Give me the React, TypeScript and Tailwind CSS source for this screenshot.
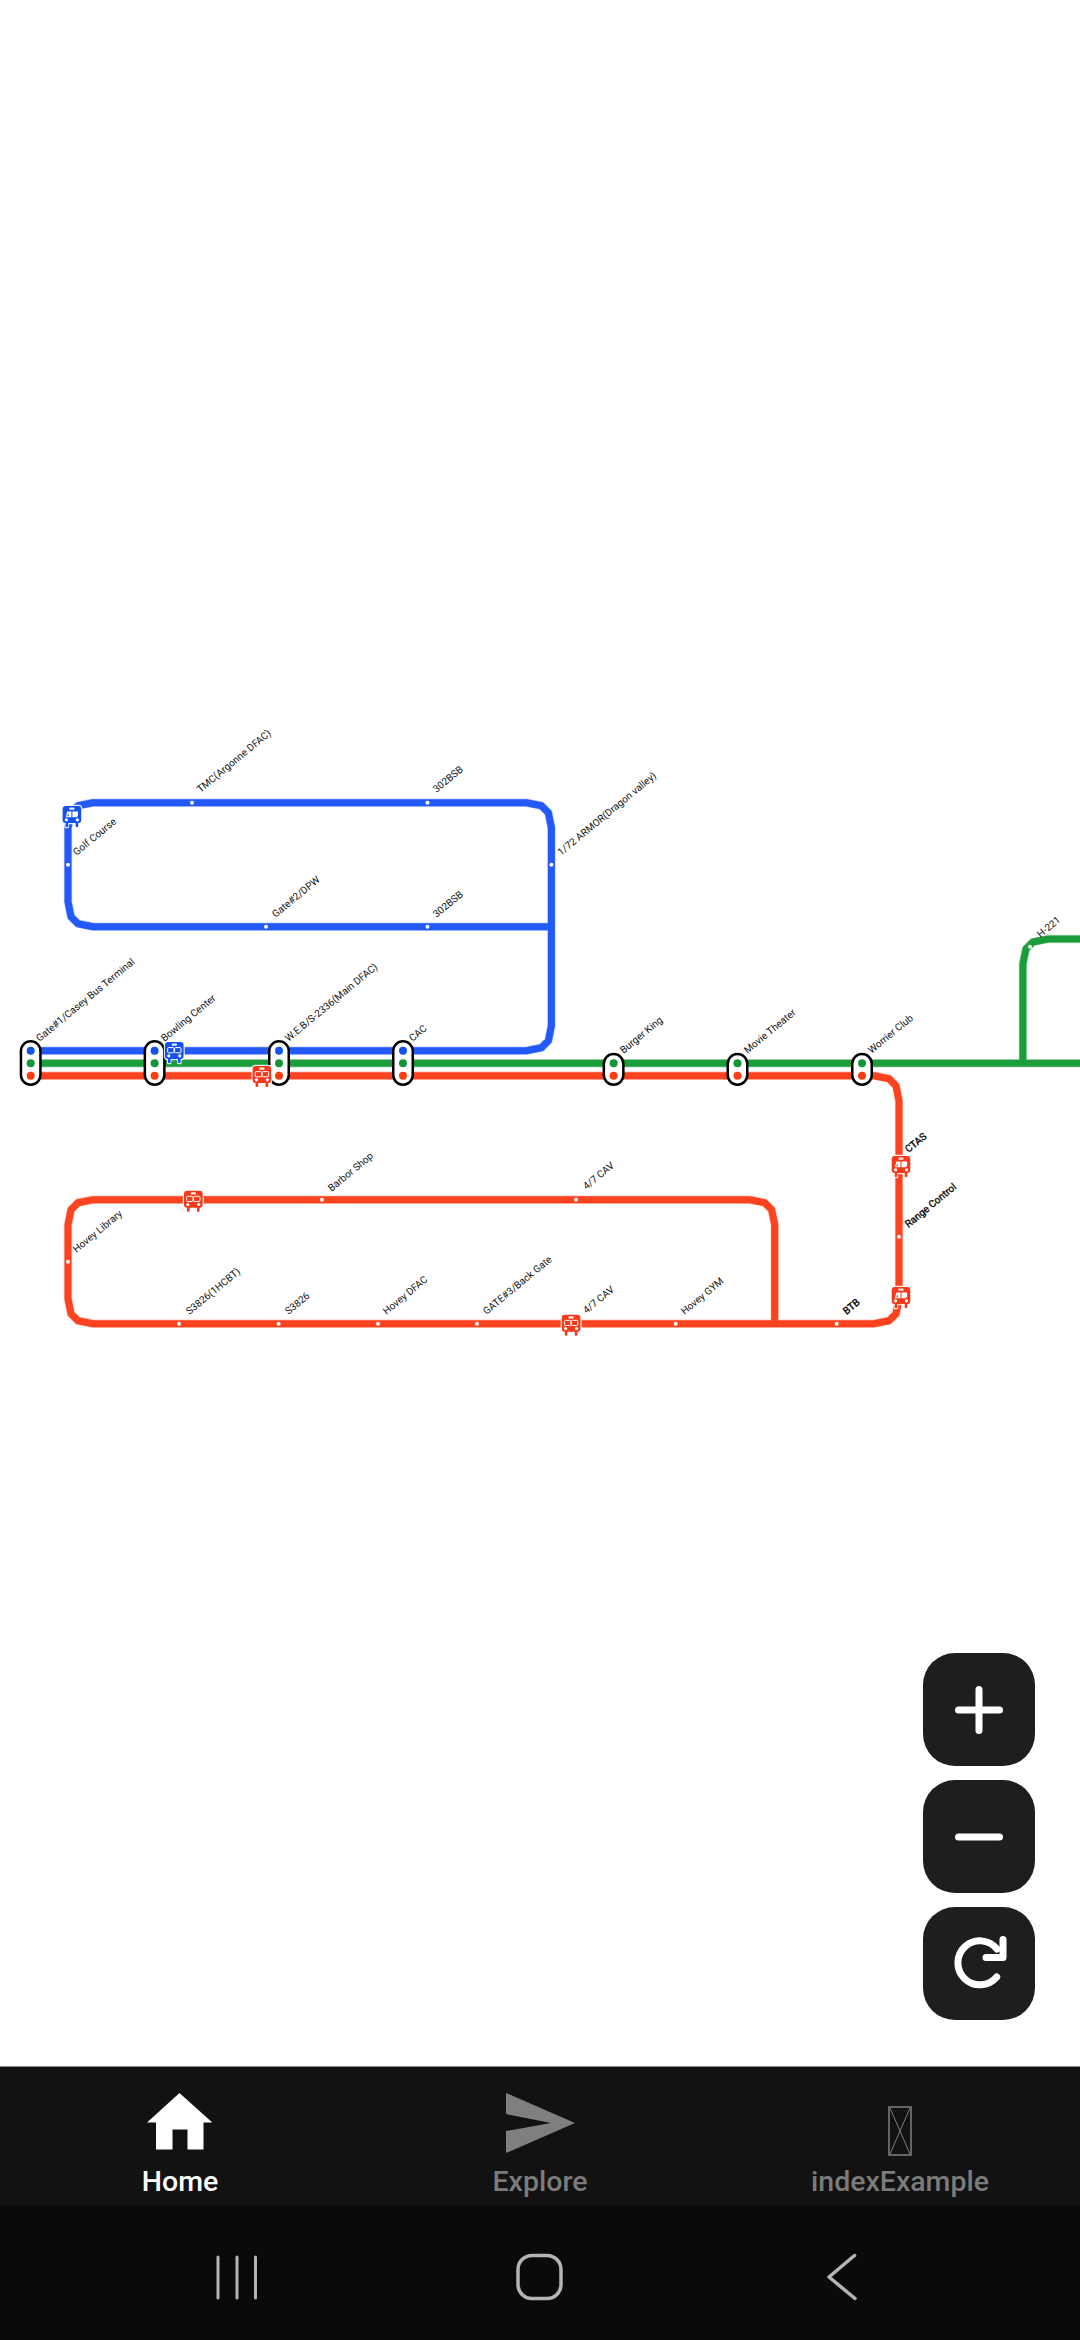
const BLUE = "#2259f7";
const GREEN = "#1c9d3c";
const RED = "#fb4320";

type P = [number, number];

// coarse rounded corner: the map draws its arcs as four short segments
function corner(c: P, a: P, b: P): string {
  const pt = (u: number, v: number) => `${c[0] - a[0] * u + b[0] * v},${c[1] - a[1] * u + b[1] * v}`;
  return `L${pt(25, 0)} L${pt(10, 3)} L${pt(3, 10)} L${pt(0, 25)}`;
}

const R: P = [1, 0], L: P = [-1, 0], U: P = [0, -1], D: P = [0, 1];
const Y_B = 1050.7, Y_G = 1063.3, Y_R = 1075.7;

const bluePath =
  `M30,${Y_B} ` +
  corner([551.4, Y_B], R, U) +
  corner([551.4, 802.7], U, L) +
  corner([68, 802.7], L, D) +
  corner([68, 926.7], D, R) +
  ` L551.4,926.7`;

const redPath =
  `M30,${Y_R} ` +
  corner([899, Y_R], R, D) +
  corner([899, 1323.7], D, L) +
  corner([68, 1323.7], L, U) +
  corner([68, 1199.7], U, R) +
  corner([774.7, 1199.7], R, D) +
  ` L774.7,1323.7`;

const greenPath = `M30,${Y_G} L1080,${Y_G} M1022.9,${Y_G} ` + corner([1022.9, 939], U, R) + ` L1080,939`;

const dots: P[] = [
  [192, 802.7], [427.5, 802.7], [68, 864.7], [551.4, 864.7], [266, 926.7], [427.5, 926.7],
  [322, 1199.7], [576, 1199.7], [68, 1261.7], [179, 1323.7], [278.6, 1323.7], [378, 1323.7],
  [477, 1323.7], [675.7, 1323.7], [836.7, 1323.7], [899, 1236.7], [1030, 946.7],
];

const labels: { t: string; x: number; y: number; bold?: boolean }[] = [
  { t: "TMC(Argonne DFAC)", x: 197, y: 793 },
  { t: "302BSB", x: 433, y: 793 },
  { t: "Golf Course", x: 73, y: 856 },
  { t: "Gate#2/DPW", x: 272, y: 918 },
  { t: "302BSB", x: 433, y: 918 },
  { t: "Gate#1/Casey Bus Terminal", x: 36, y: 1042 },
  { t: "Bowling Center", x: 161, y: 1042 },
  { t: "W.E.B/S-2336(Main DFAC)", x: 285, y: 1042 },
  { t: "CAC", x: 409, y: 1042 },
  { t: "1/72 ARMOR(Dragon valley)", x: 557.5, y: 856 },
  { t: "Burger King", x: 620, y: 1054 },
  { t: "Movie Theater", x: 744, y: 1054 },
  { t: "Worrier Club", x: 868, y: 1054 },
  { t: "H-221", x: 1037, y: 938 },
  { t: "Barbor Shop", x: 328, y: 1192 },
  { t: "Hovey Library", x: 73, y: 1253 },
  { t: "S3826(1HCBT)", x: 186, y: 1315 },
  { t: "S3826", x: 285, y: 1315 },
  { t: "Hovey DFAC", x: 383, y: 1315 },
  { t: "GATE#3/Back Gate", x: 483, y: 1315 },
  { t: "4/7 CAV", x: 583, y: 1190 },
  { t: "4/7 CAV", x: 583, y: 1314 },
  { t: "Hovey GYM", x: 681, y: 1315 },
  { t: "BTB", x: 843, y: 1315, bold: true },
  { t: "CTAS", x: 905, y: 1153, bold: true },
  { t: "Range Control", x: 905, y: 1228, bold: true },
];

const stations: { x: number; three: boolean }[] = [
  { x: 30.7, three: true },
  { x: 154.6, three: true },
  { x: 279, three: true },
  { x: 403, three: true },
  { x: 613.6, three: false },
  { x: 737.5, three: false },
  { x: 862, three: false },
];

function Capsule({ x, three }: { x: number; three: boolean }) {
  const top = three ? 1041.2 : 1054;
  return (
    <g>
      <rect x={x - 9.75} y={top} width={19.5} height={1084.8 - top} rx={9.75} fill="#fff" stroke="#000" strokeWidth={2.5} />
      {three && <circle cx={x} cy={Y_B} r={4} fill="#1452ee" />}
      <circle cx={x} cy={Y_G} r={4} fill="#139636" />
      <circle cx={x} cy={Y_R} r={4} fill="#fd3c12" />
    </g>
  );
}

function Bus({ x, y, color, doors }: { x: number; y: number; color: string; doors?: boolean }) {
  // x, y: top-left of the 18.5 x 21 bus
  return (
    <g transform={`translate(${x} ${y})`}>
      <rect x={-1.2} y={-1.2} width={21} height={19.4} rx={4} fill="#fff" fillOpacity={0.85} />
      <rect x={2} y={16} width={4.4} height={6.2} rx={1} fill="#fff" fillOpacity={0.85} />
      <rect x={12.2} y={16} width={4.4} height={6.2} rx={1} fill="#fff" fillOpacity={0.85} />
      <rect x={0} y={0} width={18.6} height={17} rx={3} fill={color} />
      <rect x={3} y={16} width={2.6} height={5} rx={0.8} fill={color} />
      <rect x={13} y={16} width={2.6} height={5} rx={0.8} fill={color} />
      <rect x={6.6} y={1.6} width={5.4} height={2.2} rx={1.1} fill="#fff" fillOpacity={0.9} />
      {doors ? (
        <g>
          <path d="M4.6 5.6 H8.8 V11.2 H3.2 Z" fill="#fff" />
          <path d="M5.6 7.2 L4.6 10.2 H6.4 Z" fill={color} />
          <path d="M9.8 5.6 H15.4 V9.8 L14 11.2 H9.8 Z" fill="#fff" />
        </g>
      ) : (
        <g fill="none" stroke="#fff" strokeWidth={1}>
          <rect x={2.6} y={5.6} width={6.4} height={5.2} rx={1} />
          <rect x={9.6} y={5.6} width={6.4} height={5.2} rx={1} />
        </g>
      )}
      <circle cx={3.8} cy={13.8} r={1.6} fill="#fff" />
      <circle cx={14.8} cy={13.8} r={1.6} fill="#fff" />
    </g>
  );
}

function Line({ d, color }: { d: string; color: string }) {
  return (
    <g fill="none" strokeLinejoin="round">
      <path d={d} stroke={color} strokeOpacity={0.3} strokeWidth={8.4} />
      <path d={d} stroke={color} strokeWidth={7} />
    </g>
  );
}

function RouteMap() {
  return (
    <svg className="absolute inset-0" width={1080} height={2066} viewBox="0 0 1080 2066">
      <Line d={bluePath} color={BLUE} />
      <Line d={greenPath} color={GREEN} />
      <Line d={redPath} color={RED} />
      {dots.map(([x, y], i) => (
        <circle key={i} cx={x} cy={y} r={2} fill="#fff" />
      ))}
      {labels.map((l, i) => (
        <text
          key={i}
          x={0}
          y={0}
          transform={`translate(${l.x + 3.5} ${l.y}) rotate(-39.5)`}
          fontFamily="Roboto, sans-serif"
          fontSize={10}
          fill="#111"
          stroke={l.bold ? "#000" : "none"}
          strokeWidth={l.bold ? 0.35 : 0}
        >
          {l.t}
        </text>
      ))}
      {stations.map((s) => (
        <Capsule key={s.x} x={s.x} three={s.three} />
      ))}
      <Bus x={62.6} y={806} color="#1452ee" doors />
      <Bus x={165} y={1042} color="#1452ee" />
      <Bus x={252.6} y={1066} color="#f5391a" />
      <Bus x={184} y={1190.7} color="#f5391a" />
      <Bus x={561.8} y={1314.7} color="#f5391a" />
      <Bus x={891.7} y={1156} color="#f5391a" doors />
      <Bus x={891.7} y={1287} color="#f5391a" doors />
    </svg>
  );
}

function MapButton({ children }: { children: React.ReactNode }) {
  return (
    <button className="flex h-[113px] w-[112px] items-center justify-center rounded-[32px] bg-[#1e1e1e]">
      {children}
    </button>
  );
}

function ZoomControls() {
  return (
    <div className="absolute right-[45px] top-[1653px] flex flex-col gap-[14px]">
      <MapButton>
        <svg width={48} height={48} viewBox="0 0 48 48" fill="none" stroke="#fff" strokeWidth={7} strokeLinecap="round">
          <path d="M24 3.5 V44.5 M3.5 24 H44.5" />
        </svg>
      </MapButton>
      <MapButton>
        <svg width={48} height={48} viewBox="0 0 48 48" fill="none" stroke="#fff" strokeWidth={7} strokeLinecap="round">
          <path d="M3.5 24 H44.5" />
        </svg>
      </MapButton>
      <MapButton>
        <svg width={60} height={60} viewBox="0 0 60 60" fill="none" stroke="#fff" strokeWidth={7} strokeLinecap="round" strokeLinejoin="round">
          <path d="M47.7 43 A22 22 0 1 1 48 15" />
          <path d="M54 5.5 V23.5 H37" />
        </svg>
      </MapButton>
    </div>
  );
}

function TabItem({ label, active, children }: { label: string; active?: boolean; children: React.ReactNode }) {
  return (
    <div className="flex flex-1 flex-col items-center pt-[26px]">
      <div className="flex h-[62px] items-start justify-center">{children}</div>
      <span
        className={`mt-[11px] text-[28.5px] leading-[32px] font-medium [font-family:Roboto,sans-serif] ${
          active ? "text-white" : "text-[#7b7b7b]"
        }`}
      >
        {label}
      </span>
    </div>
  );
}

function TabBar() {
  return (
    <div className="flex h-[139px] border-t border-[#8a8a8a] bg-[#121212]">
      <TabItem label="Home" active>
        <svg width={66} height={57} viewBox="0 0 66 57" fill="#fff">
          <path d="M32.5 0 L65.3 29.5 H56.5 V56.5 H40.5 V36.5 H25.5 V56.5 H9 V29.5 H0 Z" />
        </svg>
      </TabItem>
      <TabItem label="Explore">
        <svg width={70} height={60} viewBox="0 0 70 60" fill="#7f7f7f" className="ml-[1px]">
          <path d="M0 0 L69 30 L0 60 V38 L45 30 L0 21 Z" />
        </svg>
      </TabItem>
      <TabItem label="indexExample">
        <svg width={24} height={50} viewBox="0 0 24 50" fill="none" stroke="#7b7b7b" strokeWidth={1.6} className="mt-[13px]">
          <rect x={1} y={1} width={22} height={48} />
          <path d="M2 2 L22 48 M22 2 L2 48" strokeWidth={1} />
        </svg>
      </TabItem>
    </div>
  );
}

function SystemNav() {
  return (
    <div className="flex h-[135px] items-center justify-center bg-[#0a0a0a]">
      <svg width={1080} height={135} viewBox="0 2205 1080 135" fill="none" stroke="#b4b4b4" strokeLinecap="round" strokeLinejoin="round">
        <path d="M218 2257 V2298 M237 2257 V2298 M255.5 2257 V2298" strokeWidth={3} />
        <rect x={518} y={2255.5} width={43} height={43} rx={14} strokeWidth={3.5} />
        <path d="M854.5 2255.5 L829 2277 L855 2298.5" strokeWidth={3.5} />
      </svg>
    </div>
  );
}

export default function App() {
  return (
    <div className="flex h-[2340px] w-[1080px] flex-col overflow-hidden bg-white">
      <main className="relative flex-1">
        <RouteMap />
        <ZoomControls />
      </main>
      <TabBar />
      <SystemNav />
    </div>
  );
}
